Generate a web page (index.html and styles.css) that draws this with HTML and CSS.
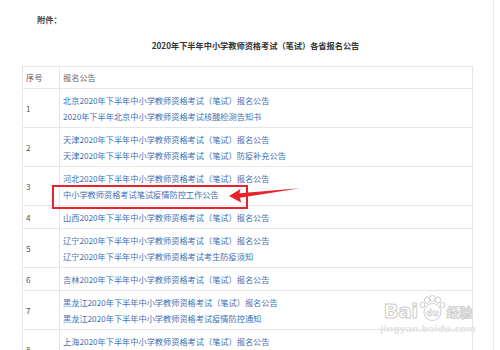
FILE: index.html
```html
<!DOCTYPE html>
<html lang="zh-CN">
<head>
<meta charset="utf-8">
<title>附件</title>
<link rel="stylesheet" href="styles.css">
</head>
<body>
<div class="page">
  <p class="attach">附件：</p>
  <h1 class="title">2020年下半年中小学教师资格考试（笔试）各省报名公告</h1>
  <table class="list">
    <tr class="head"><td class="num">序号</td><td>报名公告</td></tr>
    <tr><td class="num">1</td><td><a>北京2020年下半年中小学教师资格考试（笔试）报名公告</a><a>2020年下半年北京中小学教师资格考试核酸检测告知书</a></td></tr>
    <tr><td class="num">2</td><td><a>天津2020年下半年中小学教师资格考试（笔试）报名公告</a><a>天津2020年下半年中小学教师资格考试（笔试）防疫补充公告</a></td></tr>
    <tr><td class="num">3</td><td><a>河北2020年下半年中小学教师资格考试（笔试）报名公告</a><a>中小学教师资格考试笔试疫情防控工作公告</a></td></tr>
    <tr><td class="num">4</td><td><a>山西2020年下半年中小学教师资格考试（笔试）报名公告</a></td></tr>
    <tr><td class="num">5</td><td><a>辽宁2020年下半年中小学教师资格考试（笔试）报名公告</a><a>辽宁2020年下半年中小学教师资格考试考生防疫须知</a></td></tr>
    <tr><td class="num">6</td><td><a>吉林2020年下半年中小学教师资格考试（笔试）报名公告</a></td></tr>
    <tr><td class="num">7</td><td><a>黑龙江2020年下半年中小学教师资格考试（笔试）报名公告</a><a>黑龙江2020年下半年中小学教师资格考试疫情防控通知</a></td></tr>
    <tr><td class="num">8</td><td><a>上海2020年下半年中小学教师资格考试（笔试）报名公告</a><a>上海2020年下半年中小学教师资格考试疫情防控须知</a></td></tr>
  </table>

  <div class="mark-box"></div>
  <svg class="arrow" width="500" height="350" viewBox="0 0 500 350">
    <polygon points="229,196 240.5,189 239.5,193.3 300,188.3 240,197.8 241,202.5" fill="#e8222b"/>
  </svg>

  <div class="watermark">
    <div class="wm-top">
      <span class="wm-bai">Bai</span>
      <svg class="wm-paw" width="27" height="27" viewBox="0 0 27 27">
        <g fill="#fff" stroke="#c9c9c9" stroke-width="1">
          <ellipse cx="8" cy="5" rx="2.6" ry="3.2"/>
          <ellipse cx="13.5" cy="3.5" rx="2.6" ry="3.2"/>
          <ellipse cx="19" cy="5" rx="2.6" ry="3.2"/>
          <ellipse cx="3.5" cy="10" rx="2.3" ry="2.8"/>
          <ellipse cx="23.5" cy="10" rx="2.3" ry="2.8"/>
          <circle cx="13.5" cy="17" r="8.5"/>
        </g>
        <text x="13.5" y="20.5" text-anchor="middle" class="wm-du">du</text>
      </svg>
      <span class="wm-jy">经验</span>
    </div>
    <div class="wm-url">jingyan.baidu.com</div>
  </div>

  <div class="edge"></div>
</div>
</body>
</html>
```

FILE: styles.css
```css
html, body {
  margin: 0;
  padding: 0;
  background: #fff;
}

body {
  font-family: "Noto Sans CJK SC", "Noto Sans", sans-serif;
  font-size: 8.2px;
  line-height: 16px;
  color: #555;
}

.page {
  position: relative;
  width: 500px;
  height: 350px;
  overflow: hidden;
  box-sizing: border-box;
  padding: 11px 0 0 22px;
  display: flex;
  flex-direction: column;
  align-items: flex-start;
}

.attach {
  margin: 0 0 0 15px;
  font-weight: bold;
  color: #444;
}

.title {
  margin: 10px 0 13px 0;
  width: 451px;
  box-sizing: border-box;
  padding-left: 16px;
  text-align: center;
  font-size: 8.2px;
  line-height: 16px;
  font-weight: bold;
  color: #333;
}

.list {
  width: 451px;
  border-collapse: collapse;
  border: 1px solid #e6e6e6;
  flex: none;
}

.list td {
  border: 1px solid #e6e6e6;
  padding: 3px 3px;
  vertical-align: middle;
  text-align: left;
}

.list .head td {
  padding: 2px 3px 3px;
  color: #666;
}

.list td.num {
  width: 30px;
  color: #555;
}

.list a {
  display: block;
  color: #3f6fb3;
  text-decoration: none;
  white-space: nowrap;
}

.mark-box {
  position: absolute;
  left: 52px;
  top: 185px;
  width: 196px;
  height: 24px;
  box-sizing: border-box;
  border: 2px solid #e8222b;
}

.arrow {
  position: absolute;
  left: 0;
  top: 0;
}

.watermark {
  position: absolute;
  left: 383px;
  top: 295px;
  width: 90px;
  display: flex;
  flex-direction: column;
  align-items: center;
  opacity: 0.9;
}

.wm-top {
  display: flex;
  align-items: flex-end;
  height: 28px;
}

.wm-bai {
  font-family: "DejaVu Sans", sans-serif;
  font-size: 20px;
  line-height: 24px;
  font-weight: bold;
  color: #fff;
  -webkit-text-stroke: 1px #c8c8c8;
  letter-spacing: -0.5px;
}

.wm-paw {
  display: block;
  margin: 0 1px 1px;
}

.wm-du {
  font-family: "DejaVu Sans", sans-serif;
  font-size: 9px;
  font-weight: bold;
  fill: #fff;
  stroke: #c4c4c4;
  stroke-width: 0.6px;
}

.wm-jy {
  font-family: "Noto Sans CJK SC", sans-serif;
  font-size: 13px;
  line-height: 22px;
  font-weight: bold;
  color: #fff;
  -webkit-text-stroke: 0.8px #c8c8c8;
}

.wm-url {
  font-family: "DejaVu Sans", sans-serif;
  font-size: 9.5px;
  line-height: 12px;
  color: #e2e2e2;
  font-weight: bold;
  letter-spacing: -0.2px;
}

.edge {
  position: absolute;
  left: 493px;
  top: 0;
  width: 1px;
  height: 350px;
  background: #ececec;
}
```
